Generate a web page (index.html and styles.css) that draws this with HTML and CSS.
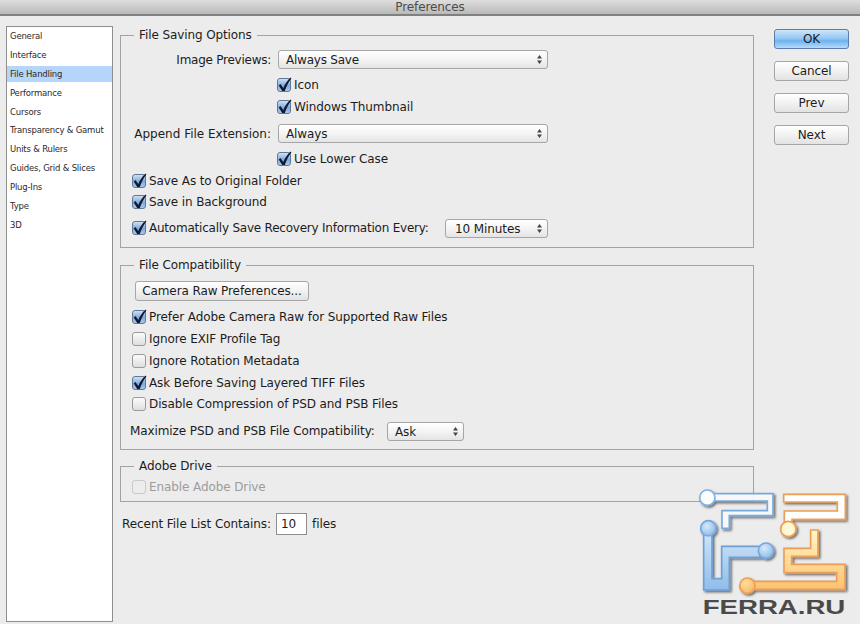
FILE: index.html
```html
<!DOCTYPE html>
<html lang="en">
<head>
<meta charset="utf-8">
<title>Preferences</title>
<link rel="stylesheet" href="styles.css">
</head>
<body>
<svg class="defs" width="0" height="0" aria-hidden="true">
  <symbol id="chk" viewBox="0 0 15 15"><path d="M3.4 7 L6.3 11 C8 7.2 10.2 3.6 13.6 0.6 L14.4 1.4 C11.6 4.8 9.4 9.2 7.8 14 L5.2 14 L1.8 8.4 Z" fill="#101a30"/></symbol>
  <symbol id="arrows" viewBox="0 0 7 11"><path d="M3.5 1 L6 4.4 H1 Z M1 6.6 H6 L3.5 10 Z" fill="#444"/></symbol>
</svg>
<header class="titlebar">Preferences</header>
<div class="window">
  <nav class="sidebar">
    <div class="nav-item">General</div>
    <div class="nav-item">Interface</div>
    <div class="nav-item active">File Handling</div>
    <div class="nav-item">Performance</div>
    <div class="nav-item">Cursors</div>
    <div class="nav-item">Transparency &amp; Gamut</div>
    <div class="nav-item">Units &amp; Rulers</div>
    <div class="nav-item">Guides, Grid &amp; Slices</div>
    <div class="nav-item">Plug-Ins</div>
    <div class="nav-item">Type</div>
    <div class="nav-item">3D</div>
  </nav>
  <main class="main">
    <fieldset class="group saving">
      <legend>File Saving Options</legend>
      <div class="row wide">
        <span class="form-label narrow">Image Previews:</span>
        <div class="select grow"><span class="tight">Always Save</span><svg class="arrows"><use href="#arrows"/></svg></div>
      </div>
      <div class="row indent g6"><span class="check on"><svg><use href="#chk"/></svg></span>Icon</div>
      <div class="row indent g3"><span class="check on"><svg><use href="#chk"/></svg></span>Windows Thumbnail</div>
      <div class="row wide g8">
        <span class="form-label open">Append File Extension:</span>
        <div class="select grow"><span>Always</span><svg class="arrows"><use href="#arrows"/></svg></div>
      </div>
      <div class="row indent g6"><span class="check on"><svg><use href="#chk"/></svg></span>Use Lower Case</div>
      <div class="row g3"><span class="check on"><svg><use href="#chk"/></svg></span>Save As to Original Folder</div>
      <div class="row g2"><span class="check on"><svg><use href="#chk"/></svg></span>Save in Background</div>
      <div class="row wide between g8">
        <span class="check-wrap tight"><span class="check on"><svg><use href="#chk"/></svg></span>Automatically Save Recovery Information Every:</span>
        <div class="select minutes"><span>10 Minutes</span><svg class="arrows"><use href="#arrows"/></svg></div>
      </div>
    </fieldset>

    <fieldset class="group compat">
      <legend>File Compatibility</legend>
      <div class="btn raw">Camera Raw Preferences...</div>
      <div class="row g6"><span class="check on"><svg><use href="#chk"/></svg></span>Prefer Adobe Camera Raw for Supported Raw Files</div>
      <div class="row g3"><span class="check"></span>Ignore EXIF Profile Tag</div>
      <div class="row g3"><span class="check"></span>Ignore Rotation Metadata</div>
      <div class="row g3"><span class="check on"><svg><use href="#chk"/></svg></span>Ask Before Saving Layered TIFF Files</div>
      <div class="row g2"><span class="check"></span>Disable Compression of PSD and PSB Files</div>
      <div class="row maximize g9">
        <span class="lift">Maximize PSD and PSB File Compatibility:</span>
        <div class="select ask"><span>Ask</span><svg class="arrows"><use href="#arrows"/></svg></div>
      </div>
    </fieldset>

    <fieldset class="group drive">
      <legend>Adobe Drive</legend>
      <div class="row disabled"><span class="check"></span>Enable Adobe Drive</div>
    </fieldset>

    <div class="recent">
      <span>Recent File List Contains:</span>
      <span class="field">10</span>
      <span>files</span>
    </div>
  </main>
  <aside class="actions">
    <div class="btn primary">OK</div>
    <div class="btn">Cancel</div>
    <div class="btn">Prev</div>
    <div class="btn">Next</div>
  </aside>
</div>

<svg class="logo" viewBox="0 0 540 462" width="180" height="154">
  <defs>
    <linearGradient id="gb" x1="0" y1="0" x2="0" y2="1"><stop offset="0" stop-color="#cfe3f8"/><stop offset="1" stop-color="#8fbdea"/></linearGradient>
    <linearGradient id="go" x1="0" y1="0" x2="0" y2="1"><stop offset="0" stop-color="#fff6c8"/><stop offset="1" stop-color="#fbc26e"/></linearGradient>
    <radialGradient id="cb" cx=".4" cy=".35" r=".8"><stop offset="0" stop-color="#d8e9fa"/><stop offset="1" stop-color="#7fb2e6"/></radialGradient>
    <radialGradient id="co" cx=".4" cy=".35" r=".8"><stop offset="0" stop-color="#ffe0a0"/><stop offset="1" stop-color="#f7ae56"/></radialGradient>
    <filter id="sh" x="-20%" y="-20%" width="140%" height="140%"><feDropShadow dx="5" dy="5" stdDeviation="3" flood-color="#000" flood-opacity=".55"/></filter>
  </defs>
  <g filter="url(#sh)" stroke-width="5" stroke-linejoin="miter">
    <path d="M90 71 H279 V137 H148 V175 H126 V122 H262 V93 H90 Z" fill="#fff" fill-opacity=".88" stroke="#78a9de"/>
    <circle cx="82" cy="83" r="23" fill="#fbfdff" stroke="#7db0e6"/>
    <path d="M71 190 H96 V326 H125 V229 H240 V262 H148 V360 H71 Z" fill="url(#gb)" stroke="#6f9fd6"/>
    <circle cx="85" cy="175" r="23" fill="url(#cb)" stroke="#76a8e0"/>
    <circle cx="258" cy="242" r="23" fill="url(#cb)" stroke="#76a8e0"/>
    <path d="M311 73 H496 V148 H336 V170 H313 V123 H472 V96 H311 Z" fill="#fff" stroke="#ee9d55"/>
    <circle cx="325" cy="177" r="23" fill="#fff8d4" stroke="#ee9d55"/>
    <path d="M392 180 H414 V259 H335 V283 H495 V358 H220 V334 H470 V308 H312 V235 H392 Z" fill="url(#go)" stroke="#ee9d55"/>
    <circle cx="202" cy="347" r="23" fill="url(#co)" stroke="#ee9d55"/>
  </g>
  <text class="logo-text" x="68" y="433" textLength="428" lengthAdjust="spacingAndGlyphs">FERRA.RU</text>
</svg>
</body>
</html>
```

FILE: styles.css
```css
* { box-sizing: border-box; }
html, body { margin: 0; height: 100%; }
body {
  position: relative;
  width: 860px;
  height: 624px;
  overflow: hidden;
  background: #ececec;
  color: #1c1c1c;
  font-family: "DejaVu Sans", sans-serif;
  font-size: 12px;
  line-height: 14px;
  letter-spacing: -0.1px;
}
.defs { position: absolute; }

.titlebar {
  height: 16px;
  background: linear-gradient(#dedede, #b9b9b9);
  border-bottom: 2px solid #808080;
  text-align: center;
  font-size: 12px;
  line-height: 14px;
  color: #4c4c4c;
  overflow: hidden;
}

.window { display: flex; height: 608px; }

.sidebar {
  display: flex;
  flex-direction: column;
  gap: 2.9px;
  width: 107px;
  height: 596px;
  margin: 10px 0 0 6px;
  padding-top: 1px;
  background: #fff;
  border: 1px solid #8f8f8f;
  flex: none;
}
.nav-item {
  height: 16px;
  padding-left: 3px;
  font-size: 8.5px;
  letter-spacing: -0.2px;
  line-height: 16px;
  white-space: nowrap;
  color: #2a2a2a;
}
.nav-item.active { background: #b5d5fc; }

.main {
  width: 634px;
  margin: 12px 0 0 7px;
  flex: none;
}

.group {
  margin: 0;
  border: 1px solid #a3a3a3;
  padding: 0 11px;
  min-width: 0;
}
.group legend {
  margin-left: 2px;
  padding: 0 5px;
  font-size: 12px;
  line-height: 14px;
}
.saving { padding-top: 8px; padding-bottom: 9px; height: 220px; }
.compat { margin-top: 10px; padding-top: 9px; padding-bottom: 9px; height: 192px; }
.drive { margin-top: 9px; padding-top: 4px; height: 43px; }

.row {
  display: flex;
  align-items: center;
  height: 19px;
  white-space: nowrap;
}
.wide { width: 416px; }
.between { justify-content: space-between; }
.indent { padding-left: 145px; }
.g2 { margin-top: 2px; }
.g3 { margin-top: 3px; }
.g6 { margin-top: 6px; }
.g7 { margin-top: 7px; }
.g8 { margin-top: 8px; }
.g9 { margin-top: 9px; }

.form-label {
  width: 139px;
  margin-right: 7px;
  text-align: right;
  flex: none;
}
.narrow { letter-spacing: -0.25px; }
.open { letter-spacing: 0; }
.check-wrap { display: flex; align-items: center; padding-bottom: 2px; }
.tight { letter-spacing: -0.22px; }
.lift { padding-bottom: 2px; }

.check {
  position: relative;
  width: 14px;
  height: 14px;
  margin-right: 3px;
  flex: none;
  border: 1px solid #9a9a9a;
  border-radius: 3px;
  background: linear-gradient(#fbfbfb, #dedede);
}
.check.on {
  border-color: #5f7896;
  background: linear-gradient(#cfe0f5, #7ea9dc 55%, #a9c9ee);
}
.check svg {
  position: absolute;
  left: -1px;
  top: -2px;
  width: 15px;
  height: 15px;
}
.disabled { color: #9c9c9c; }
.disabled .check { border-color: #c9c9c9; background: #ececec; }

.select {
  display: flex;
  align-items: center;
  justify-content: space-between;
  height: 19px;
  padding: 0 4px 0 7px;
  background: linear-gradient(#fff, #f4f4f4 50%, #e4e4e4);
  border: 1px solid #a6a6a6;
  border-radius: 3px;
}
.grow { flex: 1; }
.minutes { width: 103px; padding-left: 9px; }
.ask { width: 77px; }
.arrows { width: 7px; height: 11px; flex: none; }

.btn {
  height: 20px;
  background: linear-gradient(#fff, #f2f2f2 50%, #e2e2e2);
  border: 1px solid #a6a6a6;
  border-radius: 3px;
  text-align: center;
  line-height: 18px;
}
.raw { width: 174px; margin-left: 3px; }
.maximize { width: 334px; margin-left: -2px; justify-content: space-between; }

.recent {
  display: flex;
  align-items: center;
  gap: 5px;
  height: 22px;
  margin-top: 10px;
  padding-left: 2px;
  padding-top: 1px;
  letter-spacing: -0.06px;
}
.field {
  width: 31px;
  height: 22px;
  padding-left: 4px;
  background: #fff;
  border: 1px solid #8e8e8e;
  line-height: 20px;
}

.actions {
  display: flex;
  flex-direction: column;
  gap: 12px;
  width: 75px;
  margin: 13px 0 0 20px;
  flex: none;
}
.primary {
  border-color: #5c7cae;
  background: linear-gradient(#cfe6fb, #8fc4f3 50%, #6db2f0 60%, #b7dcfa);
}

.logo { position: absolute; left: 680px; top: 470px; }
.logo-text {
  font-family: "Liberation Sans", sans-serif;
  font-size: 62px;
  font-weight: 700;
  fill: #4a4a4a;
}
```
